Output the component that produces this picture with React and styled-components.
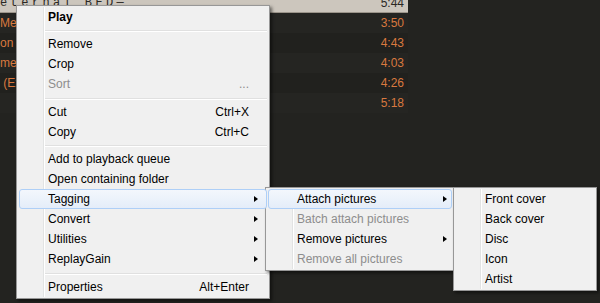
import styled, { createGlobalStyle } from "styled-components";

const GlobalStyle = createGlobalStyle`
  html, body {
    margin: 0;
    padding: 0;
    background: #232320;
    overflow: hidden;
  }
  #root {
    width: 600px;
    height: 303px;
    position: relative;
    overflow: hidden;
  }
`;

const tracks = [
  { title: "eternal BED—", time: "5:44", selected: true },
  { title: "Mezzanine", time: "3:50" },
  { title: "on the line", time: "4:43" },
  { title: "melancholia", time: "4:03" },
  { title: " (Extended)", time: "4:26" },
  { title: "", time: "5:18" },
];

const mainItems = [
  { label: "Play", bold: true },
  { sep: 7 },
  { label: "Remove" },
  { label: "Crop" },
  { label: "Sort", disabled: true, shortcut: "..." },
  { sep: 8 },
  { label: "Cut", shortcut: "Ctrl+X" },
  { label: "Copy", shortcut: "Ctrl+C" },
  { sep: 7 },
  { label: "Add to playback queue" },
  { label: "Open containing folder" },
  { label: "Tagging", sub: true, active: true },
  { label: "Convert", sub: true },
  { label: "Utilities", sub: true },
  { label: "ReplayGain", sub: true },
  { sep: 8 },
  { label: "Properties", shortcut: "Alt+Enter" },
];

const tagItems = [
  { label: "Attach pictures", sub: true, active: true },
  { label: "Batch attach pictures", disabled: true },
  { label: "Remove pictures", sub: true },
  { label: "Remove all pictures", disabled: true },
];

const pictureItems = [
  { label: "Front cover" },
  { label: "Back cover" },
  { label: "Disc" },
  { label: "Icon" },
  { label: "Artist" },
];

function MenuList({ items }) {
  return items.map((it, i) =>
    it.sep ? (
      <Separator key={i} $h={it.sep} />
    ) : (
      <Item key={i} $active={it.active} $disabled={it.disabled} $bold={it.bold}>
        <Label>{it.label}</Label>
        {it.shortcut && <Shortcut>{it.shortcut}</Shortcut>}
        {it.sub && <Arrow />}
      </Item>
    )
  );
}

export default function App() {
  return (
    <Page>
      <GlobalStyle />
      <Playlist>
        {tracks.map((t, i) => (
          <Row key={i} $selected={t.selected} $odd={i % 2 === 1}>
            <Title $selected={t.selected}>{t.title}</Title>
            <Time $selected={t.selected}>{t.time}</Time>
          </Row>
        ))}
      </Playlist>

      <Menu $left={16} $top={5} $width={254} $arrowRight={8}>
        <MenuList items={mainItems} />
      </Menu>
      <Menu $left={265} $top={187} $width={190} $arrowRight={4}>
        <MenuList items={tagItems} />
      </Menu>
      <Menu $left={453} $top={187} $width={144} $arrowRight={4}>
        <MenuList items={pictureItems} />
      </Menu>
    </Page>
  );
}

const Page = styled.div`
  width: 600px;
  height: 303px;
  position: relative;
  display: flex;
  flex-direction: column;
  overflow: hidden;
  background: #232320;
  font-family: "Liberation Sans", Arial, sans-serif;
`;

const Playlist = styled.div`
  width: 408px;
  display: flex;
  flex-direction: column;
  margin-top: -7px;
`;

const Row = styled.div`
  height: 20px;
  flex-shrink: 0;
  display: flex;
  align-items: center;
  padding-right: 4px;
  box-sizing: border-box;
  font-size: 12px;
  background: ${(p) => (p.$selected ? "#ccc6bd" : p.$odd ? "#252522" : "#21211e")};
  border-bottom: ${(p) => (p.$selected ? "1px solid #9c958b" : "none")};
`;

const Title = styled.div`
  flex: 1;
  white-space: pre;
  overflow: hidden;
  color: ${(p) => (p.$selected ? "#2a2824" : "#d9793f")};
  font-family: ${(p) =>
    p.$selected ? `"Liberation Mono", monospace` : `"Liberation Sans", Arial, sans-serif`};
  letter-spacing: ${(p) => (p.$selected ? "3.4px" : "0")};
`;

const Time = styled.div`
  color: ${(p) => (p.$selected ? "#2a2824" : "#d9793f")};
`;

const Menu = styled.div`
  position: absolute;
  left: ${(p) => p.$left}px;
  top: ${(p) => p.$top}px;
  width: ${(p) => p.$width}px;
  box-sizing: border-box;
  padding: 1px 2px;
  background: #f0f0f0;
  border: 1px solid #979797;
  box-shadow: 2px 2px 3px rgba(0, 0, 0, 0.5);
  font-size: 12px;
  color: #000;

  &::before {
    content: "";
    position: absolute;
    left: 26px;
    top: 1px;
    bottom: 1px;
    width: 1px;
    background: #e2e3e3;
    box-shadow: 1px 0 0 #fff;
  }

  --arrow-right: ${(p) => p.$arrowRight}px;
`;

const Item = styled.div`
  position: relative;
  height: 20px;
  display: flex;
  align-items: center;
  box-sizing: border-box;
  padding: 0 17px 0 29px;
  border: 1px solid ${(p) => (p.$active ? "#aecff7" : "transparent")};
  border-radius: 3px;
  background: ${(p) =>
    p.$active ? "linear-gradient(#f3f7fc, #e4edf9)" : "transparent"};
  color: ${(p) => (p.$disabled ? "#8d8d8d" : "#000")};
  font-weight: ${(p) => (p.$bold ? "bold" : "normal")};
  z-index: 1;
`;

const Label = styled.span`
  flex: 1;
  white-space: nowrap;
  margin-left: -1px;
`;

const Shortcut = styled.span`
  white-space: nowrap;
`;

const Arrow = styled.span`
  position: absolute;
  right: var(--arrow-right);
  top: 6px;
  width: 0;
  height: 0;
  border-top: 3.5px solid transparent;
  border-bottom: 3.5px solid transparent;
  border-left: 4px solid #000;
`;

const Separator = styled.div`
  height: ${(p) => p.$h}px;
  display: flex;
  align-items: center;
  padding-left: 25px;

  &::after {
    content: "";
    flex: 1;
    height: 1px;
    background: #e0e0e0;
    box-shadow: 0 1px 0 #fff;
  }
`;
